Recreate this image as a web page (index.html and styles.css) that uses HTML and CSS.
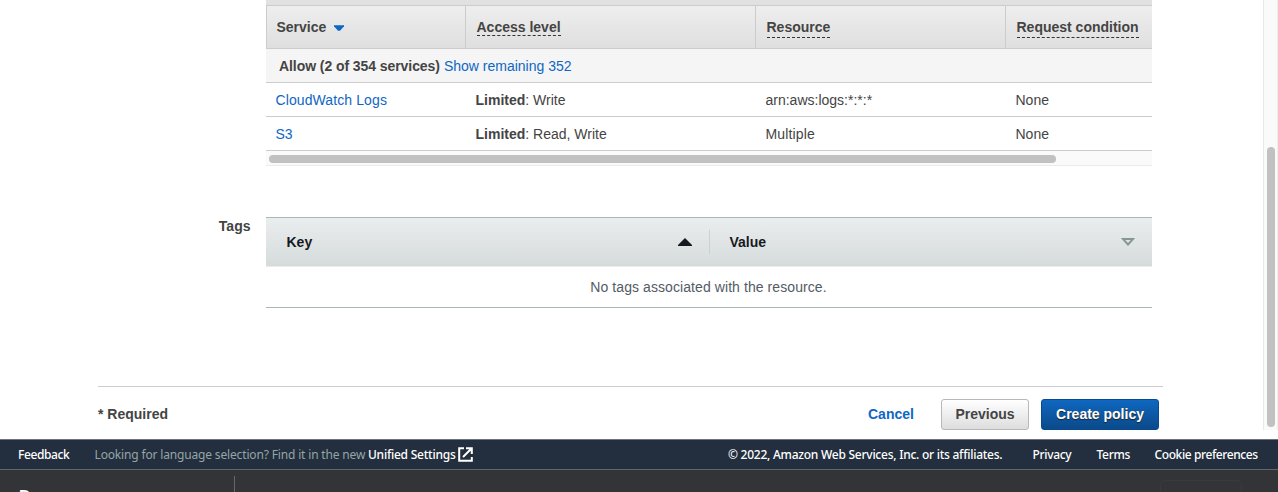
FILE: index.html
```html
<!DOCTYPE html>
<html lang="en">
<head>
<meta charset="utf-8">
<title>Review policy</title>
<link rel="stylesheet" href="styles.css">
</head>
<body>
<div class="viewport">
  <main class="content">
    <section class="summary">
      <div class="summary-cap"></div>
      <div class="grid grid-head">
        <div class="th"><span class="t-service">Service</span><svg class="sort" width="10" height="6" viewBox="0 0 10 6"><path d="M0 .3h10v1L6 5.8H4L0 1.3z" fill="#0f67c4"/></svg></div>
        <div class="th"><span class="hint t-access">Access level</span></div>
        <div class="th"><span class="hint low t-resource">Resource</span></div>
        <div class="th"><span class="hint low t-condition">Request condition</span></div>
      </div>
      <div class="group"><b class="t-allow">Allow (2 of 354 services)</b><a class="t-remaining">Show remaining 352</a></div>
      <div class="grid row">
        <div><a class="t-cloud">CloudWatch Logs</a></div><div><b class="t-limited">Limited</b><span class="t-w">: Write</span></div><div><span class="t-arn">arn:aws:logs:*:*:*</span></div><div><span class="t-none">None</span></div>
      </div>
      <div class="grid row">
        <div><a class="t-s3">S3</a></div><div><b class="t-limited">Limited</b><span class="t-rw">: Read, Write</span></div><div><span class="t-multiple">Multiple</span></div><div><span class="t-none">None</span></div>
      </div>
      <div class="hscroll"><div class="hthumb"></div></div>
    </section>
    <section class="tags">
      <div class="tags-label"><span class="t-tags">Tags</span></div>
      <div class="tags-table">
        <div class="tags-head">
          <div class="tag-col key"><span class="t-key">Key</span><svg width="14" height="8" viewBox="0 0 14 8"><path d="M7 0l7 7v1H0V7z" fill="#16191f"/></svg></div>
          <div class="tag-col value"><span class="t-value">Value</span><svg width="14" height="8" viewBox="0 0 14 8"><path d="M1.9 1h10.2L7 6.5z" fill="none" stroke="#879596" stroke-width="1.9"/></svg></div>
        </div>
        <div class="tags-empty"><span class="t-empty">No tags associated with the resource.</span></div>
      </div>
    </section>
    <div class="actions">
      <span class="required t-required">* Required</span>
      <a class="cancel"><span class="t-cancel">Cancel</span></a>
      <button class="btn previous"><span class="t-previous">Previous</span></button>
      <button class="btn create"><span class="t-create">Create policy</span></button>
    </div>
  </main>
  <div class="vscroll"><div class="vthumb"></div></div>
</div>
<footer class="footer">
  <a class="feedback"><span class="t-feedback">Feedback</span></a>
  <div class="lang"><span class="t-looking">Looking for language selection? Find it in the new</span><a class="t-unified">Unified Settings</a><svg width="15" height="15" viewBox="0 0 15 15" fill="none" stroke="#fff" stroke-width="2"><path d="M6 1.2H1.2v12.6h12.6V10M8 1.2h5.8V7M13.5 1.5L5 10"/></svg></div>
  <span class="copy"><span class="t-copy">© 2022, Amazon Web Services, Inc. or its affiliates.</span></span>
  <a class="privacy"><span class="t-privacy">Privacy</span></a><a class="terms"><span class="t-terms">Terms</span></a><a class="cookie"><span class="t-cookie">Cookie preferences</span></a>
</footer>
<div class="dock"><div class="dock-left"><span>D</span></div><div class="dock-box"></div></div>
</body>
</html>
```
FILE: styles.css
```css
* { box-sizing: border-box; }
body { margin: 0; width: 1278px; height: 492px; overflow: hidden; background: #fff; color: #444; font: 14px/20px "Liberation Sans", Arial, sans-serif; }
a { color: #0f67c4; }
span, b, a { white-space: nowrap; }
svg { display: block; flex: none; }
.viewport { display: flex; height: 439px; }
.content { width: 1263px; }
.summary { margin-left: 266px; width: 886px; height: 166px; }
.summary-cap { height: 6px; background: #e1e1e1; border-bottom: 1px solid #ccc; }
.grid { display: grid; grid-template-columns: 200px 290px 250px 146px; }
.grid-head { height: 43px; background: linear-gradient(#eee, #dfdfdf); border-bottom: 1px solid #ccc; border-left: 1px solid #ccc; grid-template-columns: 199px 290px 250px 146px; font-weight: bold; }
.th { display: flex; align-items: flex-start; padding: 11px 0 0 10.5px; border-right: 1px solid #ccc; }
.th:first-child { padding-left: 9.5px; }
.th:last-child { border-right: 0; }
.sort { margin: 8px 0 0 8px; }
.hint { height: 19px; border-bottom: 1px dashed #333; }
.hint.low { height: 21px; }
.group { display: flex; gap: 4px; height: 34px; padding: 7px 0 0 13px; background: #f5f5f5; border-bottom: 1px solid #ccc; }
.t-allow { letter-spacing: -.07px; }
.t-cloud { letter-spacing: .1px; }
.t-empty { letter-spacing: .08px; }
.t-multiple { letter-spacing: .15px; }
.row { height: 34px; padding-top: 7px; border-bottom: 1px solid #ccc; }
.row > div { padding-left: 9.5px; }
.hscroll { height: 15px; background: #fafafa; border-bottom: 1px solid #ececec; padding: 4px 0 0 2.5px; }
.hthumb { width: 787.5px; height: 8px; border-radius: 4px; background: #c1c1c1; }
.tags { display: flex; margin-top: 51px; height: 91px; }
.tags-label { width: 266px; padding: 0 15.5px 0 0; text-align: right; line-height: 18px; font-weight: bold; }
.tags-table { width: 886px; border-top: 1px solid #aab7b8; border-bottom: 1px solid #aab7b8; }
.tags-head { display: flex; align-items: center; height: 49px; background: linear-gradient(#eaeded, #d5dbdb); border-bottom: 1px solid #eaeded; color: #16191f; font-weight: bold; }
.tag-col { display: flex; justify-content: space-between; align-items: center; height: 24px; }
.key { width: 444px; padding: 0 17.5px 0 20.5px; border-right: 1px solid #cfcfcf; }
.value { width: 442px; padding: 0 17px 0 19.5px; }
.tags-empty { display: flex; justify-content: center; padding: 10px 1px 0 0; color: #545b64; }
.actions { display: flex; margin: 78px 0 0 98px; width: 1065px; height: 53px; padding-top: 12px; border-top: 1px solid #ccc; font-weight: bold; line-height: 31px; }
.required { width: 770px; }
.cancel { width: 73px; }
.btn { height: 31px; padding: 0; border-radius: 3px; font: bold 14px/29px "Liberation Sans", Arial, sans-serif; }
.previous { width: 88px; margin-right: 12px; border: 1px solid #b8b8b8; background: linear-gradient(#fff, #ddd); color: #444; }
.create { width: 118px; border: 1px solid #084a8f; background: linear-gradient(#0f67c0, #0b4a8a); color: #fff; text-shadow: 0 1px 1px #222; }
.vscroll { width: 15px; height: 430px; background: #fafafa; border-left: 1px solid #e8e8e8; border-right: 1px solid #ededed; padding: 147px 0 0 3px; }
.vthumb { width: 8px; height: 280px; border-radius: 4px; background: #c1c1c1; }
.footer { display: flex; height: 30px; background: #232f3e; border-top: 1px solid #6b727b; color: #fff; font: 12px/30px "Noto Sans", "Open Sans", sans-serif; padding-left: 18px; }
.footer a { color: #fff; font-weight: 500; }
.feedback { width: 76.5px; }
.lang { display: flex; width: 633.5px; color: #95a5a6; }
.lang svg { margin: 7px 0 0 2px; }
.copy { width: 304.5px; font-weight: 500; }
.privacy { width: 64px; }
.terms { width: 58px; }
.t-feedback { letter-spacing: -.38px; }
.t-looking { width: 273.5px; letter-spacing: -.16px; }
.t-unified { width: 87.5px; letter-spacing: -.24px; }
.t-copy { letter-spacing: -.25px; }
.t-privacy, .t-terms { letter-spacing: -.33px; }
.t-cookie { letter-spacing: -.4px; }
.dock { display: flex; justify-content: space-between; height: 23px; background: #333438; border-top: 1px solid #64656a; overflow: hidden; padding-top: 6px; }
.dock-left { width: 235px; border-right: 1px solid #66676b; padding: 11px 0 0 19px; color: #fff; font: bold 16px/20px "Liberation Sans", sans-serif; }
.dock-box { width: 82px; height: 40px; margin: 4px 36px 0 0; border: 1px solid #393a3e; border-radius: 5px; }
```
